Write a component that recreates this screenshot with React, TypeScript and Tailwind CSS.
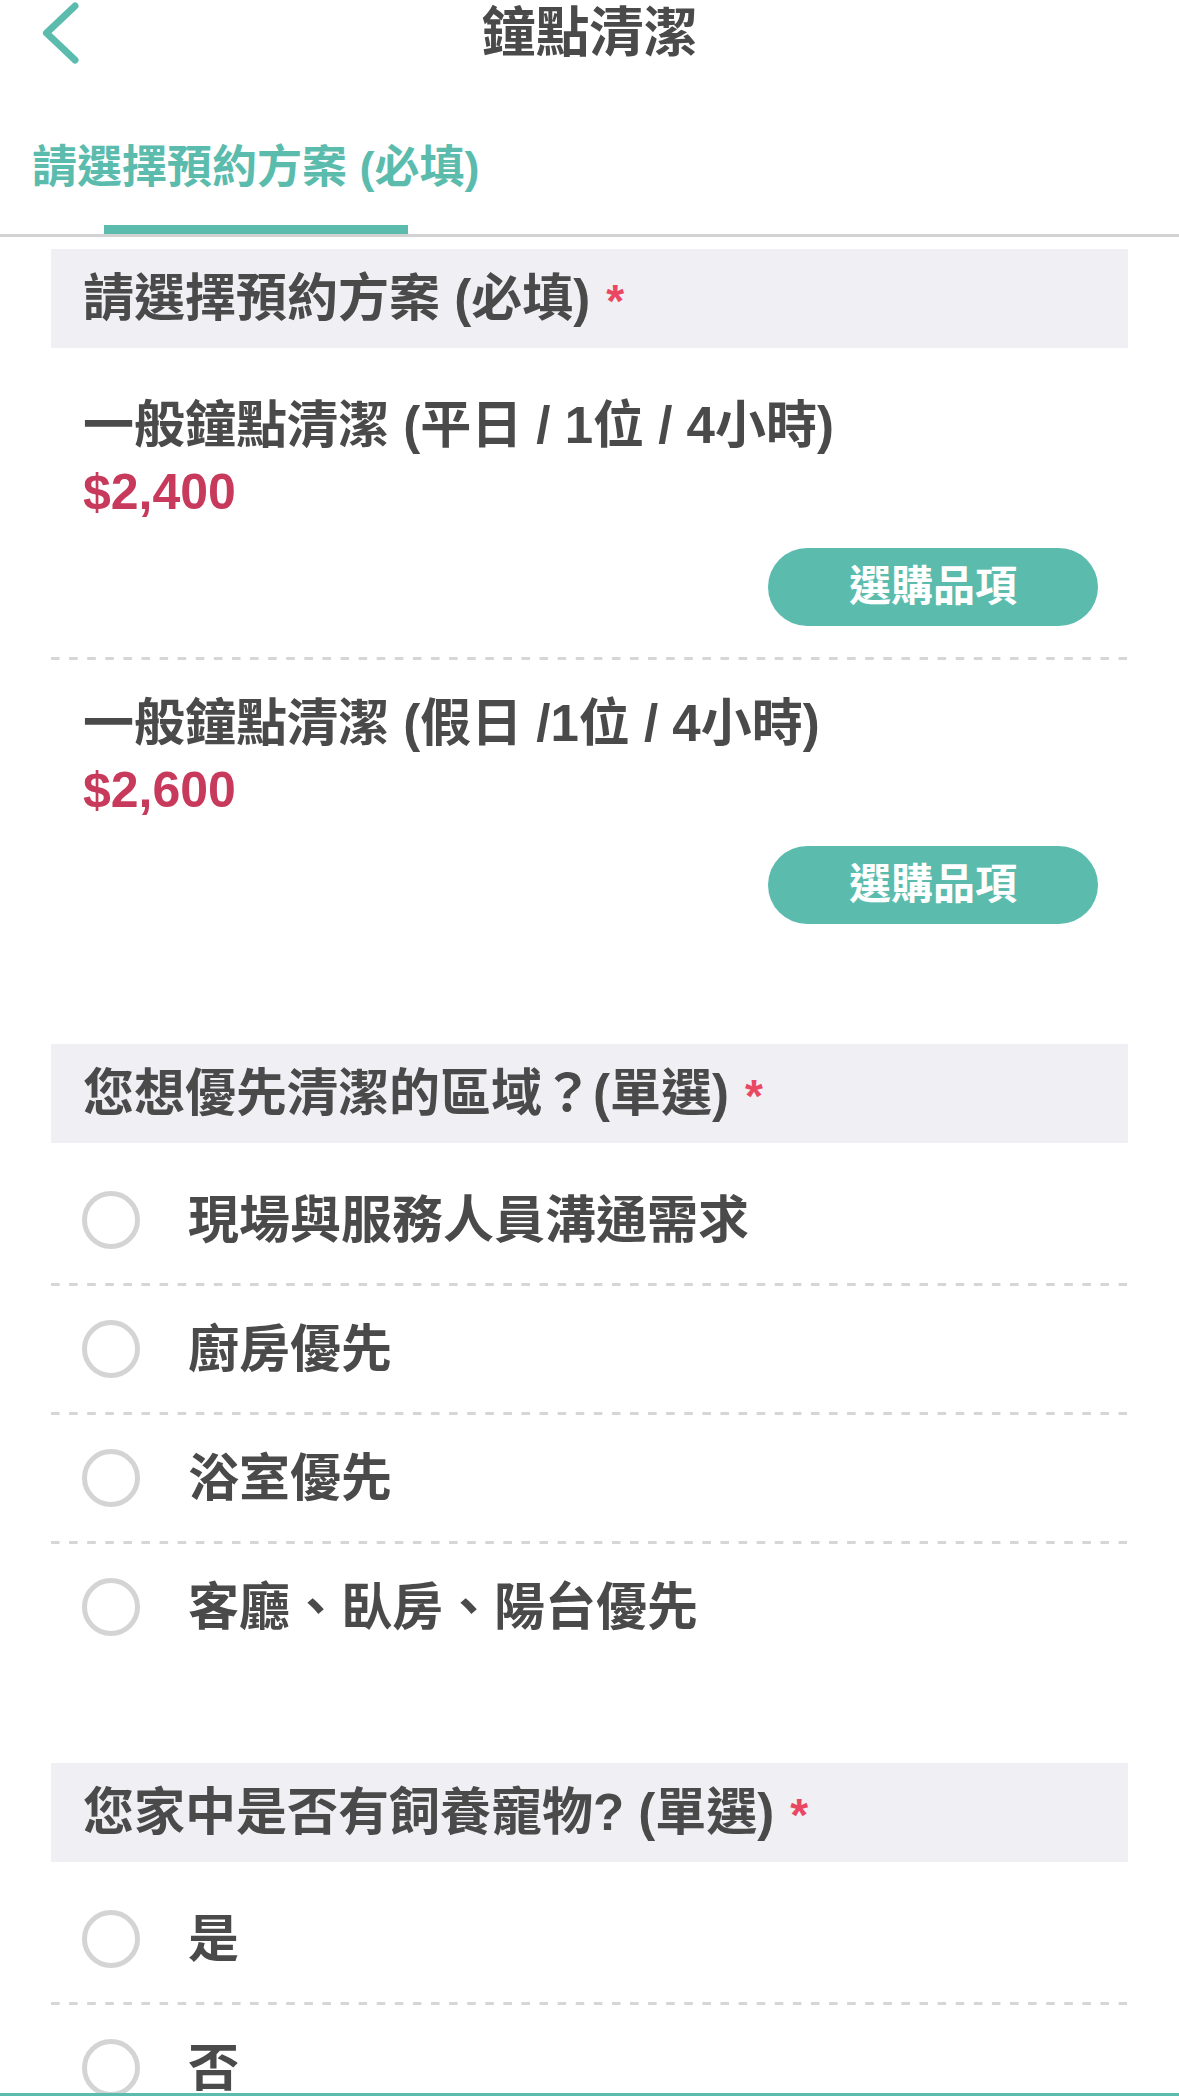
import React from "react";

const FONT = { fontFamily: '"Liberation Sans", "Noto Sans CJK TC", "Noto Sans", sans-serif' };

function Dashed() {
  return (
    <div className="h-[3px] bg-[linear-gradient(to_right,#d6d6d6_50%,transparent_50%)] bg-[length:18.1px_3px] bg-repeat-x" />
  );
}

function SectionHeader({ text }: { text: string }) {
  return (
    <div className="h-[99px] bg-[#efeff4] flex items-center px-[32px] mb-[14px]">
      <span className="text-[51px] leading-none font-bold text-[#4a4a4a] whitespace-nowrap">{text}</span>
      <span className="ml-[16px] text-[46px] leading-none font-bold text-[#ea4862] self-start mt-[29px]">*</span>
    </div>
  );
}

function PlanItem({ title, price, last }: { title: string; price: string; last?: boolean }) {
  return (
    <>
      <div className="flex flex-col pt-[31px] pb-[31px] pl-[32px] pr-[30px]">
        <div className="text-[51px] leading-[66px] font-bold text-[#4a4a4a] whitespace-nowrap">{title}</div>
        <div className="text-[50px] leading-[66px] font-bold text-[#c83a5c]">{price}</div>
        <button className="self-end mt-[23px] w-[330px] h-[78px] rounded-full bg-[#5bbcae] text-white text-[42px] font-bold leading-none flex items-center justify-center">
          選購品項
        </button>
      </div>
      {last ? null : <Dashed />}
    </>
  );
}

function OptionRow({ label, last }: { label: string; last?: boolean }) {
  return (
    <>
      <div className="h-[126px] flex items-center pl-[31px]">
        <div className="w-[58px] h-[58px] rounded-full border-[5px] border-[#d4d4d4] shrink-0" />
        <span className="ml-[48px] text-[51px] leading-none font-bold text-[#4a4a4a] whitespace-nowrap">{label}</span>
      </div>
      {last ? null : <Dashed />}
    </>
  );
}

export default function App() {
  return (
    <div className="w-[1179px] bg-white min-h-[2096px]" style={FONT}>
      {/* Nav bar */}
      <div className="grid grid-cols-[1fr_auto_1fr] h-[66px] items-center">
        <div className="pl-[40px] flex items-center">
          <svg width="40" height="62" viewBox="0 0 40 62" fill="none">
            <path d="M35 4 L6.5 31 L35 58" stroke="#5bbcae" strokeWidth="7" strokeLinecap="round" strokeLinejoin="round" />
          </svg>
        </div>
        <div className="text-[54px] leading-[66px] font-bold text-[#4a4a4a]">鐘點清潔</div>
        <div />
      </div>

      {/* Tabs */}
      <div className="border-b-[3px] border-[#d2d2d2] pt-[72px]">
        <div className="ml-[32px] w-fit flex flex-col items-center">
          <div className="text-[45px] leading-[60px] font-bold text-[#5bbcae] whitespace-nowrap">請選擇預約方案 (必填)</div>
          <div className="mt-[27px] w-[304px] h-[9px] bg-[#5bbcae]" />
        </div>
      </div>

      {/* Content */}
      <div className="mx-[51px] pt-[12px]">
        <section>
          <SectionHeader text="請選擇預約方案 (必填)" />
          <PlanItem title="一般鐘點清潔 (平日 / 1位 / 4小時)" price="$2,400" />
          <PlanItem title="一般鐘點清潔 (假日 /1位 / 4小時)" price="$2,600" last />
        </section>

        <section className="mt-[89px]">
          <SectionHeader text="您想優先清潔的區域？(單選)" />
          <OptionRow label="現場與服務人員溝通需求" />
          <OptionRow label="廚房優先" />
          <OptionRow label="浴室優先" />
          <OptionRow label="客廳、臥房、陽台優先" last />
        </section>

        <section className="mt-[93px]">
          <SectionHeader text="您家中是否有飼養寵物? (單選)" />
          <OptionRow label="是" />
          <OptionRow label="否" last />
        </section>
      </div>

      <div className="fixed left-0 right-0 bottom-0 h-[3px] bg-[#5bbcae]" />
    </div>
  );
}
